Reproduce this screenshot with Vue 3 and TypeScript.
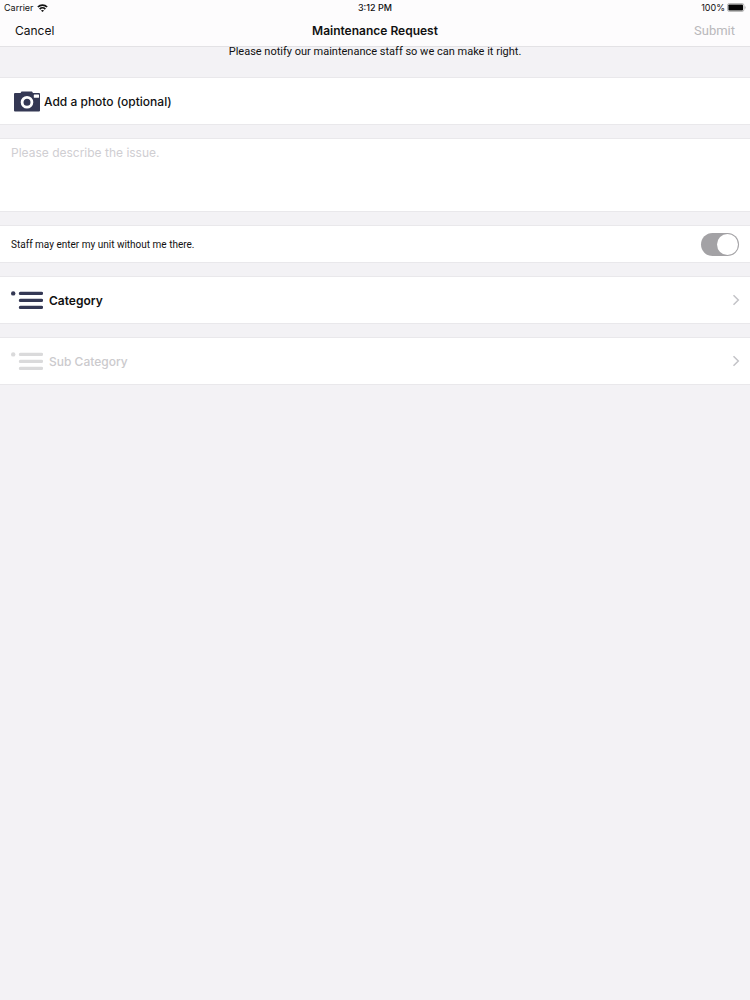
<script setup lang="ts">
import { ref } from 'vue'

interface Picker {
  id: string
  label: string
  disabled: boolean
}

const description = ref('')
const mayEnter = ref(true)
const pickers: Picker[] = [
  { id: 'category', label: 'Category', disabled: false },
  { id: 'sub-category', label: 'Sub Category', disabled: true },
]
</script>

<template>
  <div class="screen">
    <header class="top">
      <div class="status">
        <div class="carrier">
          <span>Carrier</span>
          <svg width="11" height="8" viewBox="0 0 12 9" aria-hidden="true">
            <g fill="none" stroke="#111" stroke-width="1.9">
              <path d="M0.8 3.4C3.6 0.6 8.4 0.6 11.2 3.4" />
              <path d="M2.8 5.7C4.6 4 7.4 4 9.2 5.7" />
            </g>
            <path d="M6 9L4.2 7.3C5.2 6.4 6.8 6.4 7.8 7.3Z" fill="#111" />
          </svg>
        </div>
        <span class="time">3:12 PM</span>
        <div class="power">
          <span>100%</span>
          <svg width="19" height="9" viewBox="0 0 19 9" aria-hidden="true">
            <rect x="0.5" y="0.5" width="16.4" height="8" rx="1.8" fill="#fff" stroke="#aaa" stroke-width="0.8" />
            <rect x="1.4" y="1.4" width="14.6" height="6.2" rx="0.8" fill="#050505" />
            <path d="M17.7 3C18.9 3.4 18.9 5.6 17.7 6Z" fill="#aaa" />
          </svg>
        </div>
      </div>
      <nav class="nav">
        <button type="button" class="nav-btn">Cancel</button>
        <h1>Maintenance Request</h1>
        <button type="button" class="nav-btn submit" disabled>Submit</button>
      </nav>
    </header>

    <main>
      <p class="intro">Please notify our maintenance staff so we can make it right.</p>

      <div class="groups">
        <button type="button" class="card photo">
          <svg width="26" height="21" viewBox="0 0 26 21" aria-hidden="true">
            <path d="M1 2H6.5L7.5 0.4H18L19 2H25Q26 2 26 3V19.5Q26 20.5 25 20.5H1Q0 20.5 0 19.5V3Q0 2 1 2Z" fill="#343854" />
            <circle cx="13" cy="11.3" r="4.9" fill="none" stroke="#fff" stroke-width="2.8" />
            <rect x="19.8" y="3.4" width="5.2" height="3.4" rx="0.5" fill="#fff" />
          </svg>
          <span>Add a photo (optional)</span>
        </button>

        <textarea v-model="description" class="card issue" aria-label="Issue description" placeholder="Please describe the issue."></textarea>

        <label class="card entry" for="may-enter">
          <span>Staff may enter my unit without me there.</span>
          <input id="may-enter" v-model="mayEnter" class="switch" type="checkbox" role="switch" />
        </label>

        <button v-for="p in pickers" :key="p.id" type="button" class="card picker" :disabled="p.disabled">
          <svg class="list" width="32" height="20" viewBox="0 0 32 20" aria-hidden="true">
            <circle cx="2.2" cy="3.4" r="2.2" fill="currentColor" />
            <g stroke="currentColor" stroke-width="3.2" stroke-linecap="round">
              <path d="M9.4 3.4H30.6" />
              <path d="M9.4 10.4H30.6" />
              <path d="M9.4 17.4H30.6" />
            </g>
          </svg>
          <span class="name">{{ p.label }}</span>
          <svg class="chevron" width="8" height="12" viewBox="0 0 8 12" aria-hidden="true">
            <path d="M1.5 1.3L6.3 6L1.5 10.7" fill="none" stroke="#c3c3c7" stroke-width="1.5" />
          </svg>
        </button>
      </div>
    </main>
  </div>
</template>

<style>
body {
  margin: 0;
  background: #f3f2f5;
}
</style>

<style scoped>
.screen {
  min-height: 100vh;
  background: #f3f2f5;
  color: #111;
  font-family: Inter, "Liberation Sans", sans-serif;
}
button,
textarea {
  font-family: inherit;
  color: inherit;
  border: 0;
  border-radius: 0;
  margin: 0;
  padding: 0;
  background: none;
}
.top {
  background: #fdfcfd;
  border-bottom: 1px solid #e3e2e5;
}
.status {
  display: grid;
  grid-template-columns: 1fr auto 1fr;
  align-items: center;
  height: 15px;
  padding: 0 4px;
  font-size: 9px;
  line-height: 15px;
}
.carrier,
.power {
  display: flex;
  align-items: center;
  gap: 3px;
}
.power {
  justify-content: flex-end;
  gap: 2px;
}
.time {
  font-weight: 500;
}
.nav {
  display: grid;
  grid-template-columns: 1fr auto 1fr;
  align-items: center;
  height: 31px;
  padding: 0 15px;
}
.nav-btn {
  justify-self: start;
  font-size: 12px;
  line-height: 16px;
}
.submit {
  justify-self: end;
  color: #b9b8bb;
  font-family: Roboto, "Liberation Sans", sans-serif;
  font-size: 13px;
}
h1 {
  margin: 0;
  font-size: 12px;
  line-height: 16px;
  font-weight: 600;
}
.intro {
  position: relative;
  margin: 0;
  height: 30px;
  font-family: Roboto, "Liberation Sans", sans-serif;
  font-size: 11px;
  line-height: 10px;
  text-align: center;
}
.groups {
  display: flex;
  flex-direction: column;
  gap: 13px;
}
.card {
  box-sizing: border-box;
  width: 100%;
  background: #fff;
  border-top: 1px solid #e9e8eb;
  border-bottom: 1px solid #e9e8eb;
  text-align: left;
}
.photo {
  display: flex;
  align-items: center;
  gap: 4px;
  height: 48px;
  padding: 0 14px;
  font-size: 12px;
  font-weight: 500;
}
.issue {
  display: block;
  height: 74px;
  padding: 6px 11px;
  font-size: 12px;
  line-height: 16px;
  resize: none;
  outline: none;
}
.issue::placeholder {
  color: #cfced2;
  opacity: 1;
}
.entry {
  display: flex;
  align-items: center;
  justify-content: space-between;
  height: 38px;
  padding: 0 11px;
  font-family: Roboto, "Liberation Sans", sans-serif;
  font-size: 10px;
}
.switch {
  appearance: none;
  display: flex;
  box-sizing: border-box;
  width: 38px;
  height: 23px;
  margin: 0;
  padding: 1px;
  border-radius: 12px;
  background: #a3a2a5;
}
.switch::before {
  content: "";
  width: 21px;
  height: 21px;
  border-radius: 50%;
  background: #fff;
}
.switch:checked {
  justify-content: flex-end;
}
.picker {
  display: flex;
  align-items: center;
  gap: 6px;
  height: 48px;
  padding: 0 10px 0 11px;
  font-size: 12px;
  font-weight: 600;
}
.list {
  color: #343854;
}
.name {
  flex: 1;
}
.picker:disabled {
  color: #cbcacd;
  font-weight: 500;
}
.picker:disabled .list {
  color: #dadadb;
}
</style>
